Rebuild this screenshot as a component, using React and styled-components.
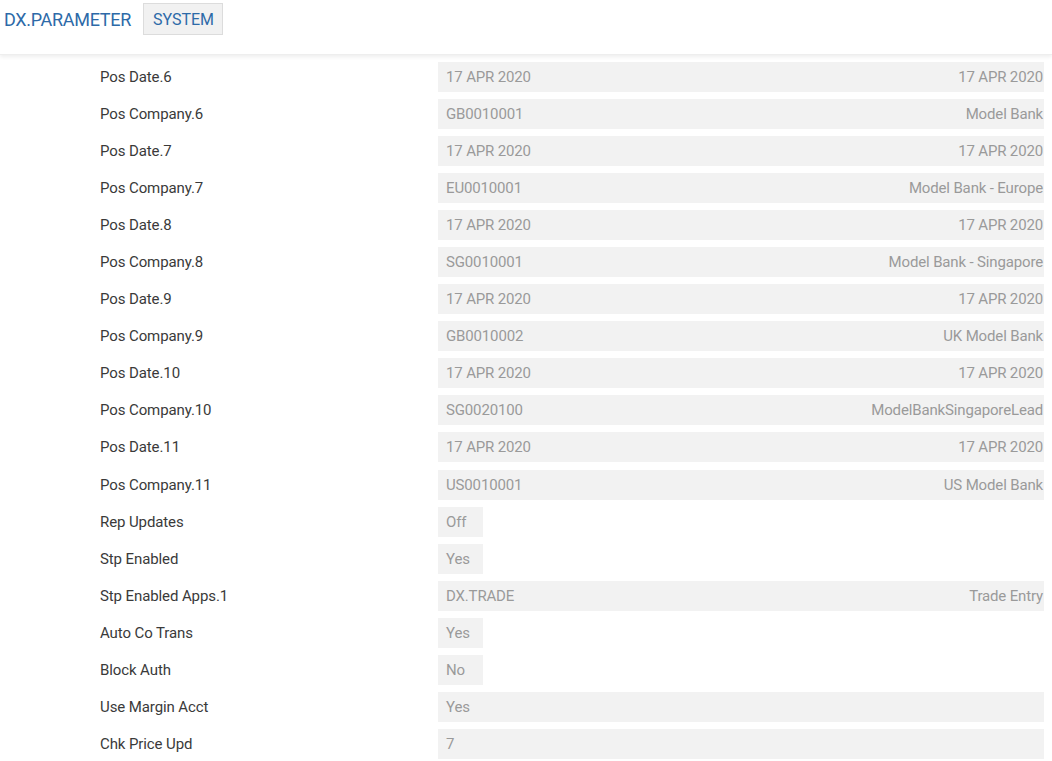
import styled, { createGlobalStyle } from "styled-components";

const GlobalStyle = createGlobalStyle`
  html, body { margin: 0; padding: 0; background: #fff; }
  body { font-family: Roboto, "Liberation Sans", sans-serif; }
`;

const rows = [
  { label: "Pos Date.6", left: "17 APR 2020", right: "17 APR 2020" },
  { label: "Pos Company.6", left: "GB0010001", right: "Model Bank" },
  { label: "Pos Date.7", left: "17 APR 2020", right: "17 APR 2020" },
  { label: "Pos Company.7", left: "EU0010001", right: "Model Bank - Europe" },
  { label: "Pos Date.8", left: "17 APR 2020", right: "17 APR 2020" },
  { label: "Pos Company.8", left: "SG0010001", right: "Model Bank - Singapore" },
  { label: "Pos Date.9", left: "17 APR 2020", right: "17 APR 2020" },
  { label: "Pos Company.9", left: "GB0010002", right: "UK Model Bank" },
  { label: "Pos Date.10", left: "17 APR 2020", right: "17 APR 2020" },
  { label: "Pos Company.10", left: "SG0020100", right: "ModelBankSingaporeLead" },
  { label: "Pos Date.11", left: "17 APR 2020", right: "17 APR 2020" },
  { label: "Pos Company.11", left: "US0010001", right: "US Model Bank" },
  { label: "Rep Updates", left: "Off", small: true },
  { label: "Stp Enabled", left: "Yes", small: true },
  { label: "Stp Enabled Apps.1", left: "DX.TRADE", right: "Trade Entry" },
  { label: "Auto Co Trans", left: "Yes", small: true },
  { label: "Block Auth", left: "No", small: true },
  { label: "Use Margin Acct", left: "Yes" },
  { label: "Chk Price Upd", left: "7" },
];

export default function App() {
  return (
    <Page>
      <GlobalStyle />
      <Header>
        <Title>DX.PARAMETER</Title>
        <Badge>SYSTEM</Badge>
      </Header>
      <List>
        {rows.map((r) => (
          <Row key={r.label}>
            <Label>{r.label}</Label>
            <Field $small={r.small}>
              <span>{r.left}</span>
              {r.right && <Right>{r.right}</Right>}
            </Field>
          </Row>
        ))}
      </List>
    </Page>
  );
}

const Page = styled.div`
  width: 1052px;
  min-height: 761px;
  overflow: hidden;
`;

const Header = styled.header`
  height: 55px;
  display: flex;
  align-items: flex-start;
  gap: 12px;
  padding: 3px 0 0 4px;
  box-sizing: border-box;
  box-shadow: 0 2px 4px rgba(0, 0, 0, 0.07);
  border-bottom: 1px solid #eeeeee;
`;

const Title = styled.h1`
  margin: 0;
  padding-top: 6px;
  font-size: 18px;
  font-weight: 400;
  color: #2d6aa8;
  letter-spacing: -0.3px;
`;

const Badge = styled.span`
  display: inline-flex;
  align-items: center;
  height: 32px;
  padding: 0 8px 0 9px;
  box-sizing: border-box;
  background: #f1f1f1;
  border: 1px solid #dcdcdc;
  font-size: 16px;
  color: #2d6aa8;
`;

const List = styled.div`
  display: flex;
  flex-direction: column;
  gap: 7.05px;
  padding-top: 7px;
`;

const Row = styled.div`
  display: grid;
  grid-template-columns: 338px 606px;
  padding-left: 100px;
  height: 30px;
  align-items: center;
`;

const Label = styled.div`
  font-size: 15px;
  color: #3a3a3a;
  letter-spacing: -0.1px;
`;

const Field = styled.div`
  height: 30px;
  width: ${(p) => (p.$small ? "45px" : "auto")};
  display: flex;
  align-items: center;
  justify-content: space-between;
  padding: 0 1px 0 8px;
  box-sizing: border-box;
  background: #f2f2f2;
  font-size: 15px;
  color: #9a9a9a;
  letter-spacing: -0.15px;
  white-space: nowrap;
`;

const Right = styled.span`
  text-align: right;
`;
